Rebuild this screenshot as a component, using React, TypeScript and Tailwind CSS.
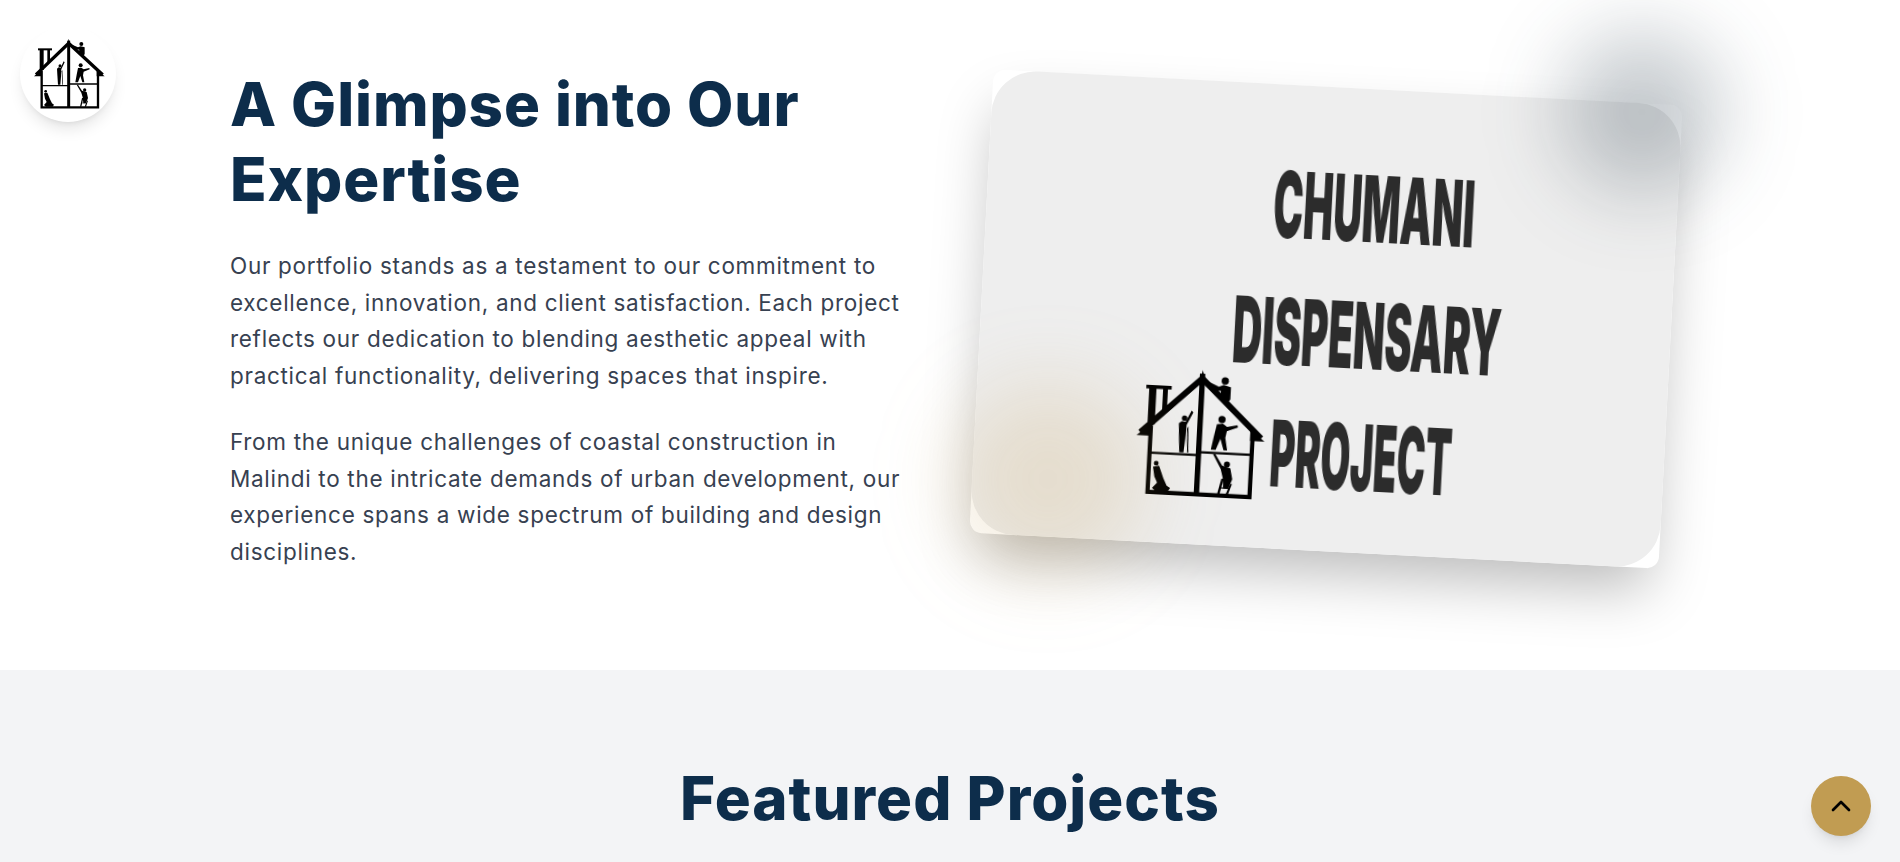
import { ChevronUp } from "lucide-react";

function HouseLogo({ className }: { className: string }) {
  return (
    <svg viewBox="0 0 240 240" className={className} aria-hidden="true">
      <g fill="none" stroke="#000" strokeLinecap="butt" strokeLinejoin="miter">
        <path d="M24 122 L122 28 L224 122" strokeWidth="10" />
        <path d="M30 46 H72" strokeWidth="6" />
        <path d="M41 46 V108" strokeWidth="12" />
        <path d="M62 46 V84" strokeWidth="8" />
        <path d="M41 110 V220 H210 V112" strokeWidth="7" />
        <path d="M122 20 V220" strokeWidth="9" />
        <path d="M41 155 H122 M122 150 H210" strokeWidth="4" />
      </g>
      <path d="M18 127 L40 108 L40 127Z M230 127 L206 108 L206 127Z M122 14 L118 34 L128 34Z" fill="#000" />
      <g fill="#000">
        <circle cx="160" cy="30" r="6" />
        <path d="M127 30 L150 40 L158 37 L170 40 L170 60 L164 70 L152 58 L154 47 L146 46 L125 33Z" />
        <circle cx="96" cy="95" r="4.5" />
        <path d="M107 82 L110 85 L100 106 L99 128 L97 152 L90 152 L88 122 L87 104 L92 100 L98 101Z" />
        <path d="M103 108 L105 152 L103 152 L101 112Z" />
        <circle cx="158" cy="94" r="6" />
        <path d="M150 102 L160 101 L167 106 L184 102 L185 106 L167 113 L165 124 L169 145 L163 145 L157 126 L150 145 L142 145 L146 122 Z" />
        <circle cx="53" cy="172" r="4" />
        <path d="M48 178 L58 176 L66 196 L72 208 L78 212 L74 218 L54 218 L48 213 L56 204 L51 194Z" />
        <circle cx="170" cy="168" r="5" />
        <path d="M146 152 L150 152 L162 170 L176 174 L180 192 L174 208 L166 208 L164 190 L160 176Z" />
        <path d="M162 192 L166 192 L160 218 L156 218Z M177 200 L180 200 L174 218 L170 218Z M160 206 H176 V208 H160Z" />
      </g>
    </svg>
  );
}

function CardLine({ text, scale }: { text: string; scale: string }) {
  return (
    <div className="flex h-[67px] w-[280px] items-center justify-center">
      <span className={`shrink-0 font-['Inter','Liberation_Sans',sans-serif] text-[92px] leading-none font-black whitespace-nowrap text-[#2c2c2c] blur-[0.4px] ${scale}`}>
        {text}
      </span>
    </div>
  );
}

export default function App() {
  return (
    <div className="relative h-screen overflow-hidden bg-white font-['Inter','Liberation_Sans',sans-serif]">
      <section className="pt-[67px] pb-[99px]">
        <div className="mx-auto grid w-[1440px] grid-cols-2 items-center gap-16">
          <div>
            <h2 className="mb-[31px] text-[60px] leading-[75px] font-extrabold tracking-[0.9px] text-[#0d2d4b]">
              A Glimpse into Our<br />Expertise
            </h2>
            <p className="mb-[29px] text-[22.5px] leading-[36.7px] tracking-[0.7px] text-[#374151]">
              Our portfolio stands as a testament to our commitment to<br />
              excellence, innovation, and client satisfaction. Each project<br />
              reflects our dedication to blending aesthetic appeal with<br />
              practical functionality, delivering spaces that inspire.
            </p>
            <p className="text-[22.5px] leading-[36.7px] tracking-[0.7px] text-[#374151]">
              From the unique challenges of coastal construction in<br />
              Malindi to the intricate demands of urban development, our<br />
              experience spans a wide spectrum of building and design<br />
              disciplines.
            </p>
          </div>
          <div className="relative">
            <div className="relative -mx-px h-[464px] rotate-3 rounded-xl bg-white shadow-[0_30px_60px_-10px_rgba(0,0,0,0.28)]">
              <div className="flex h-full flex-col items-center overflow-hidden rounded-[44px] bg-[#eeeeee] pt-[86px] pl-[84px]">
                <CardLine text="CHUMANI" scale="scale-x-[0.435]" />
                <div className="mt-[60px]">
                  <CardLine text="DISPENSARY" scale="scale-x-[0.445]" />
                </div>
                <div className="relative mt-[55px]">
                  <CardLine text="PROJECT" scale="scale-x-[0.417]" />
                  <HouseLogo className="absolute top-[-54px] left-[-96px] h-[145px] w-[145px] blur-[0.4px]" />
                </div>
              </div>
            </div>
            <div className="absolute -top-[55px] -right-[52px] h-40 w-40 rounded-full bg-[#1c2f40]/25 blur-2xl" />
            <div className="absolute -bottom-[24px] -left-[30px] h-48 w-48 rounded-full bg-[#c19c52]/20 blur-2xl" />
          </div>
        </div>
      </section>
      <section className="bg-[#f3f4f6] pt-20 pb-20">
        <h2 className="text-center text-[60px] leading-[96px] font-extrabold tracking-[1px] text-[#0d2d4b]">Featured Projects</h2>
      </section>
      <div className="absolute top-[26px] left-5 flex h-24 w-24 items-center justify-center rounded-full bg-white shadow-lg">
        <HouseLogo className="h-[80px] w-[80px] blur-[0.4px]" />
      </div>
      <button className="absolute right-[29px] bottom-[26px] flex h-[60px] w-[60px] items-center justify-center rounded-full bg-[#c19c52] shadow-lg">
        <ChevronUp size={32} strokeWidth={2} color="#000" />
      </button>
    </div>
  );
}
